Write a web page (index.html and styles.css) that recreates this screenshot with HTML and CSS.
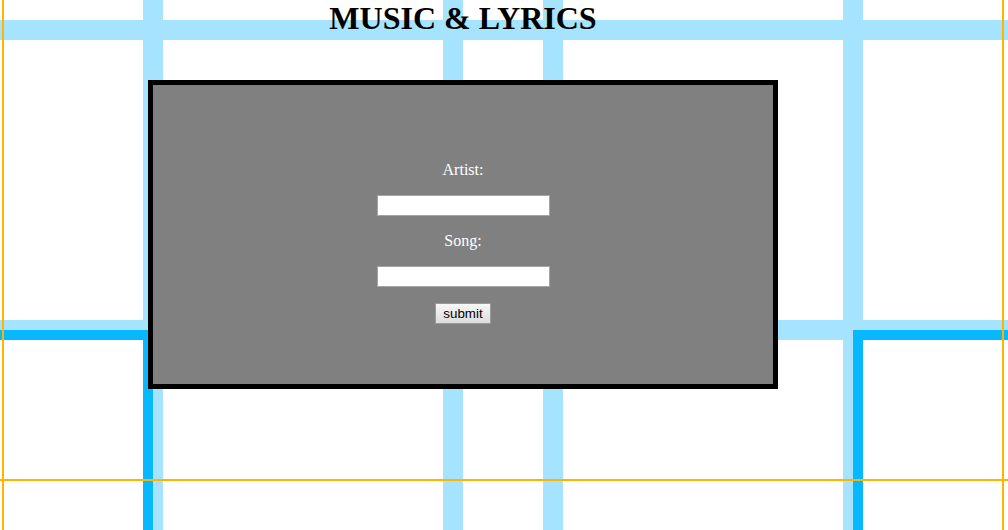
FILE: index.html
```html
<!DOCTYPE html>
<html lang="en">
<head>
<meta charset="utf-8">
<title>Music &amp; Lyrics</title>
<link rel="stylesheet" href="styles.css">
</head>
<body>
<div class="page">
  <div class="stage">
    <h1 class="title">MUSIC &amp; LYRICS</h1>
    <form class="panel" onsubmit="return false;">
      <p class="label">Artist:</p>
      <input class="field" type="text" name="artist">
      <p class="label">Song:</p>
      <input class="field" type="text" name="song">
      <button class="submit" type="submit">submit</button>
    </form>
  </div>
</div>
</body>
</html>
```

FILE: styles.css
```css
html, body {
  margin: 0;
  padding: 0;
}

body {
  font-family: "Liberation Serif", "Times New Roman", serif;
  background: #ffffff;
}

.page {
  height: 530px;
  overflow: hidden;
  background:
    /* orange guide lines */
    linear-gradient(#ffb400, #ffb400) 2px 0 / 2px 100% no-repeat,
    linear-gradient(#ffb400, #ffb400) 1002px 0 / 2px 100% no-repeat,
    linear-gradient(#ffb400, #ffb400) 0 479px / 100% 2px no-repeat,
    /* dark blue frames */
    linear-gradient(#08b8ff, #08b8ff) 0 330px / 153px 10px no-repeat,
    linear-gradient(#08b8ff, #08b8ff) 143px 330px / 10px 200px no-repeat,
    linear-gradient(#08b8ff, #08b8ff) 853px 330px / 155px 10px no-repeat,
    linear-gradient(#08b8ff, #08b8ff) 853px 330px / 10px 200px no-repeat,
    /* light blue grid */
    linear-gradient(#a6e3ff, #a6e3ff) 0 20px / 100% 20px no-repeat,
    linear-gradient(#a6e3ff, #a6e3ff) 0 320px / 100% 20px no-repeat,
    linear-gradient(#a6e3ff, #a6e3ff) 143px 0 / 20px 100% no-repeat,
    linear-gradient(#a6e3ff, #a6e3ff) 443px 0 / 20px 100% no-repeat,
    linear-gradient(#a6e3ff, #a6e3ff) 543px 0 / 20px 100% no-repeat,
    linear-gradient(#a6e3ff, #a6e3ff) 843px 0 / 20px 100% no-repeat,
    #ffffff;
}

.stage {
  margin-left: 148px;
  width: 630px;
  display: flex;
  flex-direction: column;
}

.title {
  margin: 0;
  font-size: 32px;
  line-height: 37px;
  font-weight: bold;
  text-align: center;
  color: #000000;
}

.panel {
  margin: 43px 0 0 0;
  box-sizing: border-box;
  height: 309px;
  border: 5px solid #000000;
  background: #808080;
  padding-top: 76px;
  display: flex;
  flex-direction: column;
  align-items: center;
  gap: 16px;
}

.label {
  margin: 0;
  font-size: 16px;
  line-height: 18px;
  color: #ffffff;
}

.field {
  box-sizing: border-box;
  width: 173px;
  height: 21px;
  margin: 0;
  padding: 1px 3px;
  border: 1px solid #a5a5a5;
  border-radius: 0;
  background: #ffffff;
  font-family: "Liberation Sans", Arial, sans-serif;
  font-size: 13px;
  outline: none;
}

.submit {
  box-sizing: border-box;
  height: 21px;
  margin: 0;
  padding: 0 7px;
  border: 1px solid #9a9a9a;
  border-radius: 0;
  background: linear-gradient(#f7f7f7, #dddddd);
  font-family: "Liberation Sans", Arial, sans-serif;
  font-size: 13.33px;
  line-height: 17px;
  color: #000000;
}
```
